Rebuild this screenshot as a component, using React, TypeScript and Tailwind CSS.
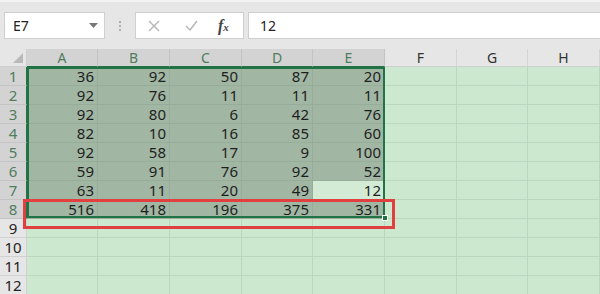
import React from "react";

const COLS = ["A", "B", "C", "D", "E", "F", "G", "H"];
const WIDTHS = [71, 72, 72, 71, 72, 72, 71, 72];

const DATA: number[][] = [
    [36, 92, 50, 87, 20],
    [92, 76, 11, 11, 11],
    [92, 80, 6, 42, 76],
    [82, 10, 16, 85, 60],
    [92, 58, 17, 9, 100],
    [59, 91, 76, 92, 52],
    [63, 11, 20, 49, 12],
    [516, 418, 196, 375, 331],
];

const font = { fontFamily: '"Noto Sans", "Liberation Sans", "Noto Sans CJK SC", sans-serif' };

const Toolbar = () => (
    <div className="h-[49px] bg-[#e6e6e6] border-t-2 border-[#f2f2f2] flex items-start pt-[10px]">
        {/* name box */}
        <div className="ml-[4px] w-[101px] h-[27px] bg-white border border-[#cfcfcf] flex items-center justify-between pl-[8px] pr-[6px]">
            <span className="text-[14px] text-[#222]">E7</span>
            <svg width="9" height="5" viewBox="0 0 9 5"><path d="M0 0h9L4.5 5z" fill="#777" /></svg>
        </div>
        <div className="w-[30px] h-[27px] flex flex-col items-center justify-center gap-[2px]">
            <span className="w-[2px] h-[2px] bg-[#b0b0b0]" />
            <span className="w-[2px] h-[2px] bg-[#b0b0b0]" />
            <span className="w-[2px] h-[2px] bg-[#b0b0b0]" />
        </div>
        {/* formula buttons */}
        <div className="w-[109px] h-[27px] bg-white border border-[#cfcfcf] flex items-center">
            <svg className="ml-[12px]" width="12" height="12" viewBox="0 0 12 12">
                <path d="M1 1l10 10M11 1L1 11" stroke="#b4b4b4" strokeWidth="1.4" />
            </svg>
            <svg className="ml-[25px]" width="13" height="11" viewBox="0 0 13 11">
                <path d="M1 6l4 4 7-9" stroke="#b4b4b4" strokeWidth="1.4" fill="none" />
            </svg>
            <span className="ml-[20px] text-[16px] italic font-bold text-[#444] leading-none" style={{ fontFamily: '"Liberation Serif", serif' }}>
                f<span className="text-[11px]">x</span>
            </span>
        </div>
        <div className="ml-[4px] flex-1 h-[27px] bg-white border border-[#cfcfcf] border-r-0 flex items-center pl-[11px]">
            <span className="text-[14px] text-[#222]">12</span>
        </div>
    </div>
);

const App = () => {
    return (
        <div className="w-[600px] h-[294px] overflow-hidden bg-[#e6e6e6] relative" style={font}>
            <Toolbar />
            {/* header row */}
            <div className="flex h-[18px]">
                <div className="w-[27px] bg-[#e6e6e6] border-r border-b border-[#cfcfcf] relative">
                    <svg className="absolute right-[3px] bottom-[3px]" width="10" height="10" viewBox="0 0 10 10">
                        <path d="M10 0v10H0z" fill="#b9b9b9" />
                    </svg>
                </div>
                {COLS.map((c, i) => (
                    <div
                        key={c}
                        style={{ width: WIDTHS[i] }}
                        className={`flex items-center justify-center text-[14px] border-r border-b ${i < 5
                            ? "bg-[#d3d3d3] text-[#4f7d5e] border-[#c4c4c4] border-b-[#217346]"
                            : "bg-[#e6e6e6] text-[#333] border-[#d4d4d4] border-b-[#cfcfcf]"}`}
                    >
                        {c}
                    </div>
                ))}
            </div>
            {/* rows */}
            {Array.from({ length: 12 }).map((_, r) => (
                <div key={r} className="flex h-[19px]">
                    <div
                        className={`w-[27px] flex items-center justify-center text-[15px] border-r border-b ${r < 8
                            ? "bg-[#d3d3d3] text-[#4f7d5e] border-[#c4c4c4] border-r-[#217346]"
                            : "bg-[#e6e6e6] text-[#222] border-[#d0d0d0]"}`}
                    >
                        {r + 1}
                    </div>
                    {COLS.map((c, i) => {
                        const sel = r < 8 && i < 5;
                        const active = r === 6 && i === 4;
                        const val = r < 8 && i < 5 ? DATA[r][i] : "";
                        return (
                            <div
                                key={c}
                                style={{ width: WIDTHS[i] }}
                                className={`flex items-center justify-end pr-[3px] text-[15px] text-[#1e1e1e] border-r border-b ${active
                                    ? "bg-[#d3ebd5] border-[#b8d2bb]"
                                    : sel
                                        ? "bg-[#a1b6a3] border-[#97ad99]"
                                        : "bg-[#cce8cf] border-[#bdd6c0]"}`}
                            >
                                {val}
                            </div>
                        );
                    })}
                </div>
            ))}
            {/* selection border */}
            <div className="absolute left-[27px] top-[67px] w-[358px] h-[151px] border-2 border-[#217346] pointer-events-none" />
            <div className="absolute left-[382px] top-[215px] w-[6px] h-[6px] bg-[#217346] border border-white" />
            {/* red highlight box */}
            <div className="absolute left-[23px] top-[199px] w-[372px] h-[30px] border-[3px] border-[#e0403f] pointer-events-none" />
        </div>
    );
};

export default App;
